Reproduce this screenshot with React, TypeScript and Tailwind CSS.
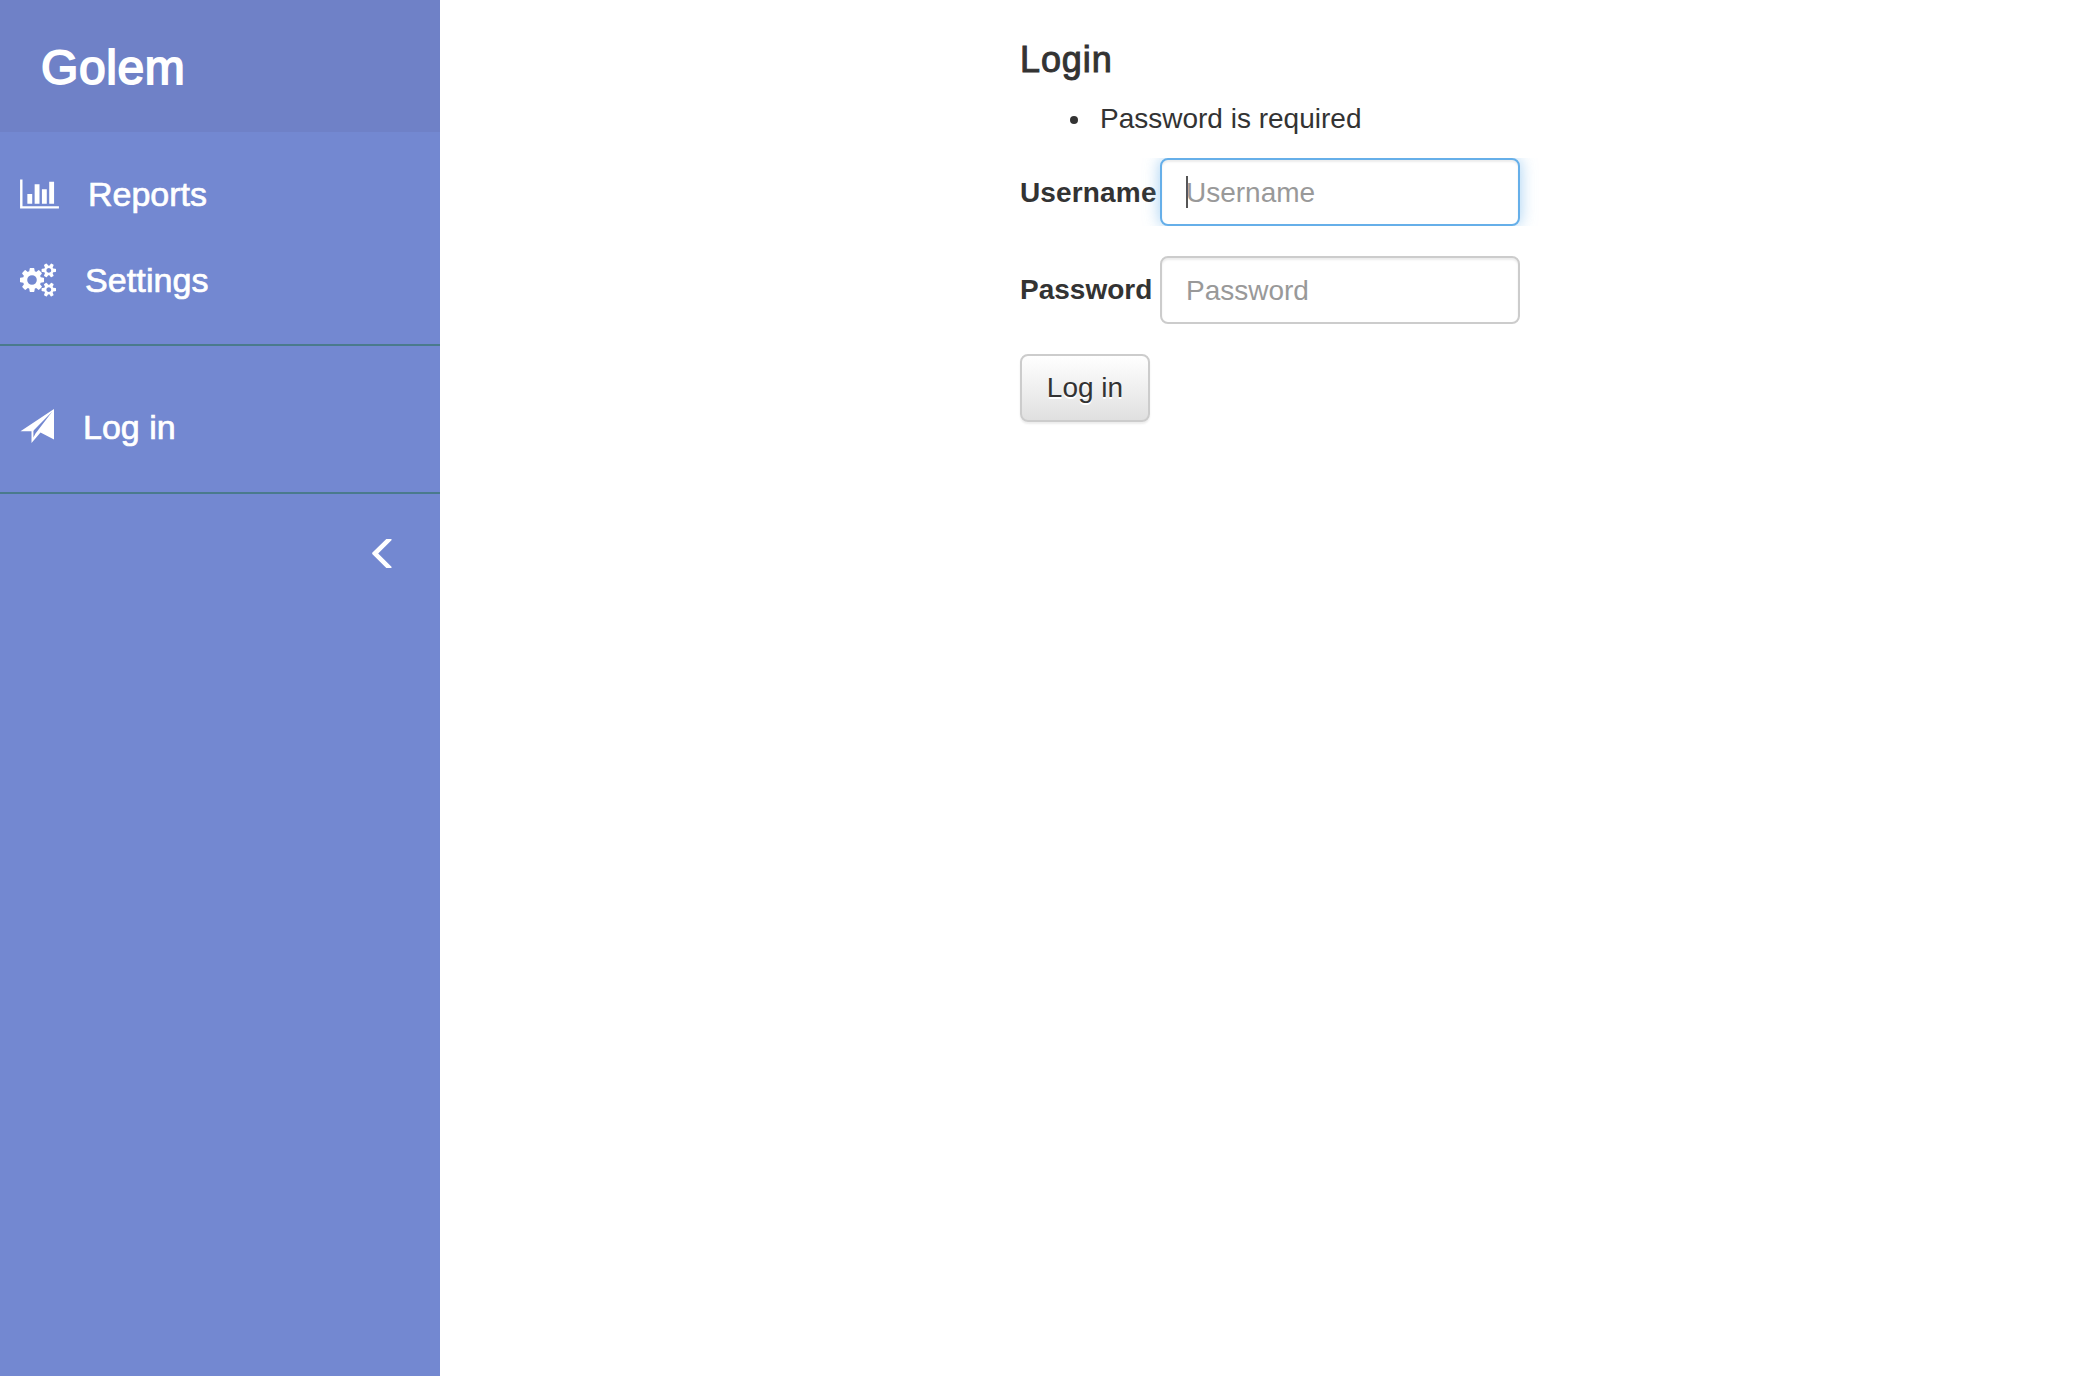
const ChartIcon = () => (
  <svg viewBox="0 0 2048 1792" fill="currentColor" className="h-[34px] w-[39px]">
    <path d="M640 896v512h-256v-512h256zm384-512v1024h-256v-1024h256zm1024 1152v128h-2048v-1536h128v1408h1920zm-640-896v768h-256v-768h256zm384-384v1152h-256v-1152h256z" />
  </svg>
);

const CogsIcon = () => (
  <svg viewBox="0 0 1920 1792" fill="currentColor" className="h-[34px] w-[36px]">
    <path d="M896 896q0-106-75-181t-181-75-181 75-75 181 75 181 181 75 181-75 75-181zm768 512q0-52-38-90t-90-38-90 38-38 90q0 53 37.5 90.5t90.5 37.5 90.5-37.5 37.5-90.5zm0-1024q0-52-38-90t-90-38-90 38-38 90q0 53 37.5 90.5t90.5 37.5 90.5-37.5 37.5-90.5zm-384 421v185q0 10-7 19.5t-16 10.5l-155 24q-11 35-32 76 34 48 90 115 7 11 7 20 0 12-7 19-23 30-82.5 89.5t-78.5 59.5q-11 0-21-7l-115-90q-37 19-77 31-11 108-23 155-7 24-30 24h-186q-11 0-20-7.5t-10-17.5l-23-153q-34-10-75-31l-118 89q-7 7-20 7-11 0-21-8-144-133-144-160 0-9 7-19 10-14 41-53t47-61q-23-44-35-82l-152-24q-10-1-17-9.5t-7-19.5v-185q0-10 7-19.5t16-10.5l155-24q11-35 32-76-34-48-90-115-7-11-7-20 0-12 7-20 22-30 82-89t79-59q11 0 21 7l115 90q34-18 77-32 11-108 23-154 7-24 30-24h186q11 0 20 7.500t10 17.500l23 153q34 10 75 31l118-89q8-7 20-7 11 0 21 8 144 133 144 160 0 8-7 19-12 16-42 54t-45 60q23 48 34 82l152 23q10 2 17 10.500t7 19.500zm640 533v140q0 16-149 31-12 27-30 52 51 113 51 138 0 4-4 7-122 71-124 71-8 0-46-47t-52-68q-20 2-30 2t-30-2q-14 21-52 68t-46 47q-2 0-124-71-4-3-4-7 0-25 51-138-18-25-30-52-149-15-149-31v-140q0-16 149-31 13-29 30-52-51-113-51-138 0-4 4-7 4-2 35-20t59-34 30-16q8 0 46 46.500t52 67.500q20-2 30-2t30 2q51-71 92-112l6-2q4 0 124 70 4 3 4 7 0 25-51 138 17 23 30 52 149 15 149 31zm0-1024v140q0 16-149 31-12 27-30 52 51 113 51 138 0 4-4 7-122 71-124 71-8 0-46-47t-52-68q-20 2-30 2t-30-2q-14 21-52 68t-46 47q-2 0-124-71-4-3-4-7 0-25 51-138-18-25-30-52-149-15-149-31v-140q0-16 149-31 13-29 30-52-51-113-51-138 0-4 4-7 4-2 35-20t59-34 30-16q8 0 46 46.500t52 67.500q20-2 30-2t30 2q51-71 92-112l6-2q4 0 124 70 4 3 4 7 0 25-51 138 17 23 30 52 149 15 149 31z" />
  </svg>
);

const SendIcon = () => (
  <svg viewBox="0 0 34 34" fill="currentColor" className="h-[34px] w-[34px]">
    <path
      fillRule="evenodd"
      d="M34 0V30.500L20.500 23.500L11.500 34V22.300H0.500ZM32.300 2.400L14.300 20.800L13.400 22V28.500L15.500 24.500Z"
    />
  </svg>
);

const MenuLeftIcon = () => (
  <svg viewBox="0 0 20 30" fill="currentColor" className="h-[30px] w-[20px]">
    <path d="M14.300 0H19.500V1.200L6.200 14.400L19.500 27.700V28.900H14.300L0.200 15V13.800Z" />
  </svg>
);

export default function App() {
  return (
    <div className="flex h-[1376px] w-[2100px] overflow-hidden bg-white font-['Liberation_Sans',Arial,sans-serif] text-[28px] leading-10 text-[#333]">
      <aside className="w-[440px] shrink-0 bg-[#7388d1] text-white">
        <div className="flex h-[132px] items-center bg-[#6f81c7] pl-[41px] pt-[3px]">
          <h1 className="text-[48px] leading-[54px] tracking-[0.6px] [-webkit-text-stroke:1.8px_currentColor]">Golem</h1>
        </div>
        <nav className="text-[34px] [-webkit-text-stroke:0.7px_currentColor]">
          <div className="flex h-[212px] flex-col pt-[42px]">
            <a className="flex h-[40px] items-center pl-5">
              <ChartIcon />
              <span className="ml-[29px]">Reports</span>
            </a>
            <a className="mt-[46px] flex h-[40px] items-center pl-5">
              <CogsIcon />
              <span className="ml-[29px] tracking-[0.1px]">Settings</span>
            </a>
          </div>
          <div className="flex h-[150px] items-center border-y-2 border-[#4a7a8c] pl-5 pt-[13px]">
            <SendIcon />
            <span className="ml-[29px] pt-[3px]">Log in</span>
          </div>
        </nav>
        <div className="flex justify-end pr-[48px] pt-[45px]">
          <MenuLeftIcon />
        </div>
      </aside>
      <main className="pl-[580px] pt-[40px]">
        <h4 className="text-[36px] leading-[40px] tracking-[0.9px] [-webkit-text-stroke:1px_currentColor]">Login</h4>
        <ul className="mt-[19px] pl-[50px]">
          <li className="flex items-center">
            <span className="mt-[2px] h-2 w-2 rounded-full bg-[#333]" />
            <span className="ml-[22px]">Password is required</span>
          </li>
        </ul>
        <div className="-mx-[30px] mt-[19px] flex h-[68px] items-center overflow-hidden px-[30px]">
          <label className="w-[140px] shrink-0 pt-px font-bold tracking-[0.15px]">Username</label>
          <div className="flex h-[68px] w-[360px] items-center rounded-[8px] border-2 border-[#66afe9] bg-white px-6 text-[#999] shadow-[inset_0_2px_2px_rgba(0,0,0,0.075),0_0_16px_rgba(102,175,233,0.6)]">
            <span className="h-8 w-[2px] bg-[#555]" />
            <span className="-ml-[2px] pt-px">Username</span>
          </div>
        </div>
        <div className="mt-[30px] flex h-[68px] items-center">
          <label className="w-[140px] shrink-0 font-bold">Password</label>
          <div className="flex h-[68px] w-[360px] items-center rounded-[8px] border-2 border-[#ccc] bg-white px-6 text-[#999] shadow-[inset_0_2px_2px_rgba(0,0,0,0.075)]">
            <span className="pt-px">Password</span>
          </div>
        </div>
        <button className="mt-[30px] h-[68px] w-[130px] rounded-[8px] border-2 border-[#ccc] bg-linear-to-b from-white to-[#e0e0e0] shadow-[inset_0_2px_0_rgba(255,255,255,0.15),0_2px_2px_rgba(0,0,0,0.075)] [text-shadow:0_2px_0_#fff]">
          Log in
        </button>
      </main>
    </div>
  );
}
